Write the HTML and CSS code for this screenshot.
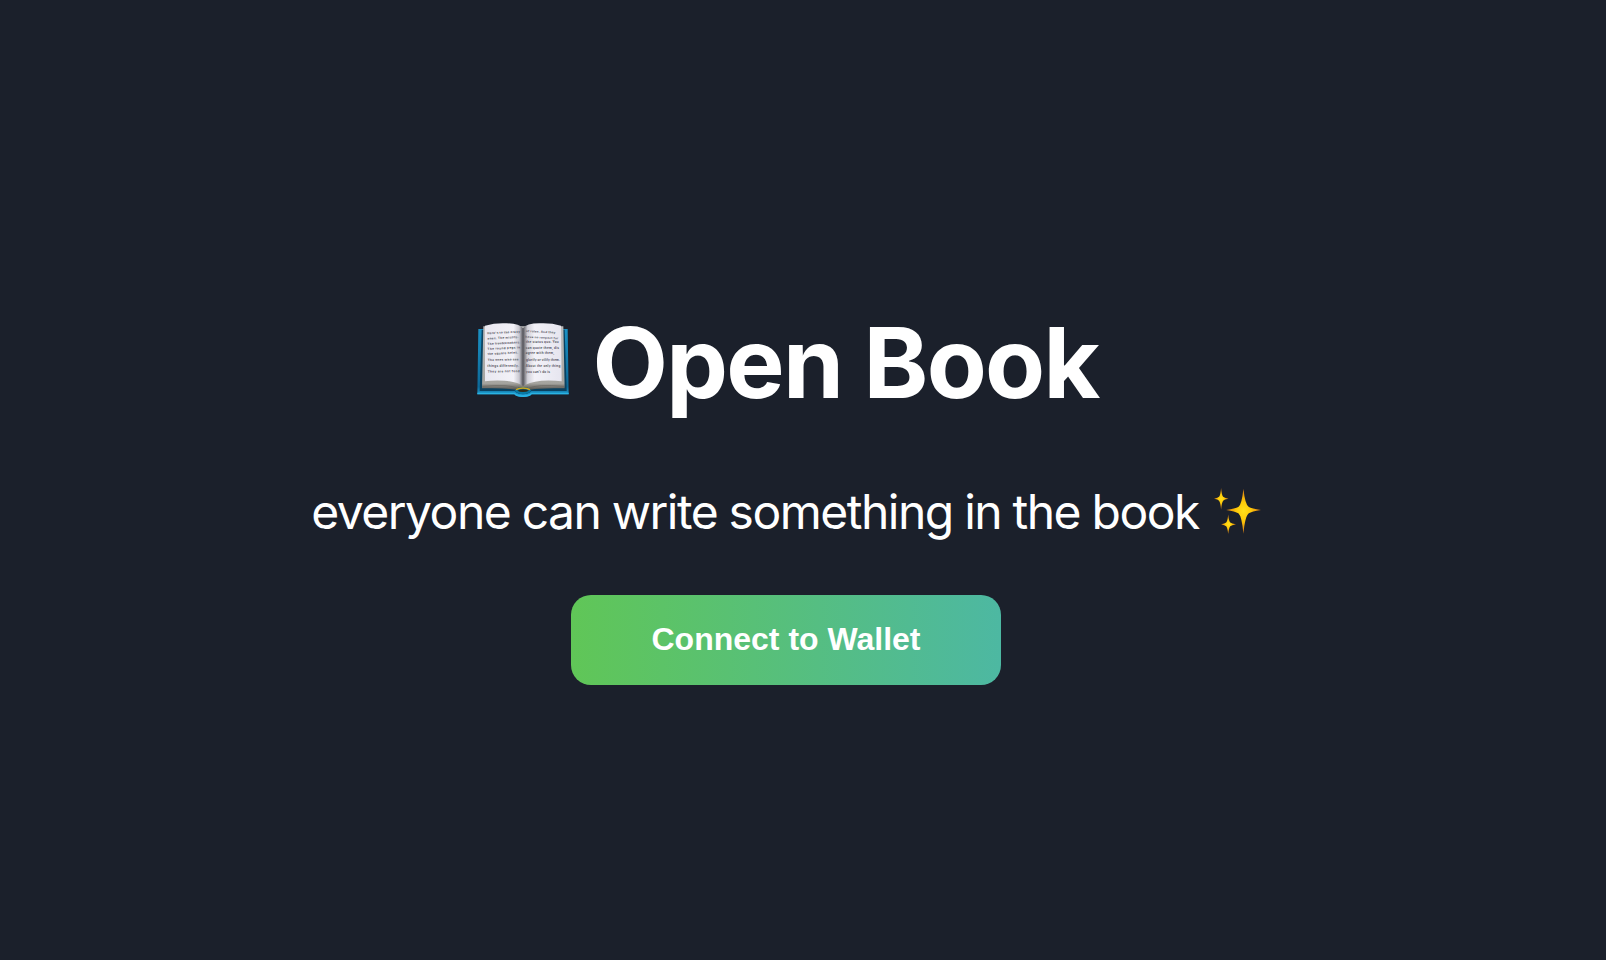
FILE: index.html
```html
<!DOCTYPE html>
<html lang="en">
<head>
<meta charset="utf-8">
<title>Open Book</title>
<link rel="stylesheet" href="styles.css">
</head>
<body>
<main class="hero">
  <h1 class="title">
    <svg class="book" viewBox="22 24 274 222" aria-hidden="true">
      <defs>
        <linearGradient id="cover" x1="0" y1="0" x2="0" y2="1"><stop offset="0" stop-color="#1b91c4"/><stop offset=".85" stop-color="#0d6998"/><stop offset="1" stop-color="#25a8dc"/></linearGradient>
        <linearGradient id="left" x1="0" x2="1"><stop offset="0" stop-color="#e9e8f0"/><stop offset=".75" stop-color="#f3f2f8"/><stop offset=".9" stop-color="#c9c8d0"/><stop offset="1" stop-color="#55555b"/></linearGradient>
        <linearGradient id="right" x1="0" x2="1"><stop offset="0" stop-color="#55555b"/><stop offset=".12" stop-color="#d2d1d9"/><stop offset=".3" stop-color="#f3f2f8"/><stop offset="1" stop-color="#e6e5ef"/></linearGradient>
        <linearGradient id="edge" x1="0" y1="0" x2="0" y2="1"><stop offset="0" stop-color="#bbb"/><stop offset=".9" stop-color="#a5a49f"/><stop offset="1" stop-color="#55534e"/></linearGradient>
      </defs>
      <path fill="url(#cover)" d="M25 42H293L296 238H185Q178 246 159 246T133 238H22Z"/>
      <path fill="#29b3e4" d="M22 233H134Q142 241 159 241T184 233H296V238H185Q178 246 159 246T133 238H22Z"/>
      <path fill="#0a4261" d="M35 44H284L290 228H184Q174 238 159 238T134 228H29Z"/>
      <path fill="url(#edge)" d="M40 34L36 220Q105 218 136 224Q142 216 159 216T182 224Q213 218 284 220L280 34Z"/>
      <path fill="none" stroke="#67655f" stroke-width="2" d="M37 214Q120 207 143 220M282 214Q200 207 175 220"/>
      <path fill="#087aa6" d="M134 227Q142 217 159 217T184 227Q175 237 159 237T134 227Z"/>
      <path fill="none" stroke="#d1a51d" stroke-width="4" d="M138 224Q146 219 159 219T180 224"/>
      <path fill="#302a17" d="M142 227Q150 223 159 223T177 227Q169 231 159 231T142 227Z"/>
      <path fill="url(#left)" d="M45 32Q75 24 105 25Q148 24 159 40V213Q145 202 104 197Q70 195 45 199Z"/>
      <path fill="url(#right)" d="M159 40Q170 24 213 25Q245 24 273 32L275 199Q248 195 214 197Q173 202 159 213Z"/>
      <g class="print">
        <g transform="rotate(-3 52 58)">
          <text x="52" y="58" textLength="98">Here's to the crazy</text>
          <text x="52" y="74" textLength="93">ones. The misfits.</text>
          <text x="51" y="90" textLength="99">The troublemakers.</text>
          <text x="50" y="105" textLength="98">The round pegs in</text>
          <text x="50" y="120" textLength="92">the square holes.</text>
        </g>
        <text x="53" y="138" textLength="93" transform="rotate(-1 53 138)">The ones who see</text>
        <text x="52" y="157" textLength="95">things differently.</text>
        <text x="53" y="173" textLength="96" transform="rotate(-1 53 173)">They are not fond</text>
        <g transform="rotate(3 166 48)">
          <text x="168" y="51" textLength="88">of rules. And they</text>
          <text x="167" y="68" textLength="99">have no respect for</text>
        </g>
        <text x="168" y="84" textLength="98">the status quo. You</text>
        <text x="167" y="101" textLength="100">can quote them, dis</text>
        <text x="167" y="118" textLength="86">agree with them,</text>
        <text x="168" y="137" textLength="102">glorify or vilify them.</text>
        <text x="167" y="156" textLength="104">About the only thing</text>
        <text x="168" y="173" textLength="72">you can't do is</text>
      </g>
    </svg>
    <span>Open Book</span>
  </h1>
  <p class="tagline">
    <span>everyone can write something in the book</span>
    <svg class="sparkles" viewBox="27 23 139 136" aria-hidden="true">
      <defs><radialGradient id="gold"><stop offset="0" stop-color="#ffe11b"/><stop offset=".4" stop-color="#ffcb09"/><stop offset="1" stop-color="#d97713"/></radialGradient></defs>
      <g fill="url(#gold)">
        <path d="M114 25Q119 73 130 79Q138 84 166 88Q138 92 130 98Q119 106 114 158Q109 106 99 98Q90 92 63 88Q90 84 99 79Q109 73 114 25Z"/>
        <path d="M48 23Q50 45 54 49Q57 52 70 55Q57 57 54 61Q50 66 48 87Q46 66 42 61Q39 57 27 55Q39 52 42 49Q46 45 48 23Z"/>
        <path d="M69 101Q71 121 75 125Q79 128 92 130Q79 133 75 136Q71 141 69 159Q67 141 63 136Q59 133 48 130Q59 128 63 125Q67 121 69 101Z"/>
      </g>
    </svg>
  </p>
  <button class="connect" type="button">Connect to Wallet</button>
</main>
</body>
</html>
```
FILE: styles.css
```css
body {
  margin: 0;
  background: #1b202b;
  color: #fff;
  font-family: Inter, "Liberation Sans", sans-serif;
}

.hero {
  box-sizing: border-box;
  min-height: 960px;
  padding: 303px 34px 0 0;
  display: flex;
  flex-direction: column;
  align-items: center;
}

.title {
  margin: 0;
  height: 120px;
  display: flex;
  align-items: flex-start;
  gap: 23px;
  padding-left: 4px;
  font-size: 98px;
  line-height: 120px;
  font-weight: 700;
  letter-spacing: -1.75px;
  white-space: nowrap;
}

.book {
  width: 92px;
  height: 74px;
  margin-top: 20px;
}

.print {
  fill: #555461;
  font: 700 9px Inter, sans-serif;
  letter-spacing: 0;
}

.tagline {
  margin: 57px 0 0;
  height: 64px;
  display: flex;
  gap: 15px;
  font-size: 48px;
  line-height: 64px;
  letter-spacing: -1.5px;
  word-spacing: -0.6px;
  white-space: nowrap;
}

.sparkles {
  width: 47px;
  height: 46px;
  margin-top: 8px;
}

.connect {
  width: 430px;
  height: 90px;
  margin-top: 51px;
  padding: 0 0 1px;
  border: 0;
  border-radius: 20px;
  background: linear-gradient(90deg, #60c657, #4db8a2);
  color: #fff;
  font: 700 32px "Liberation Sans", Arial, sans-serif;
}
```
